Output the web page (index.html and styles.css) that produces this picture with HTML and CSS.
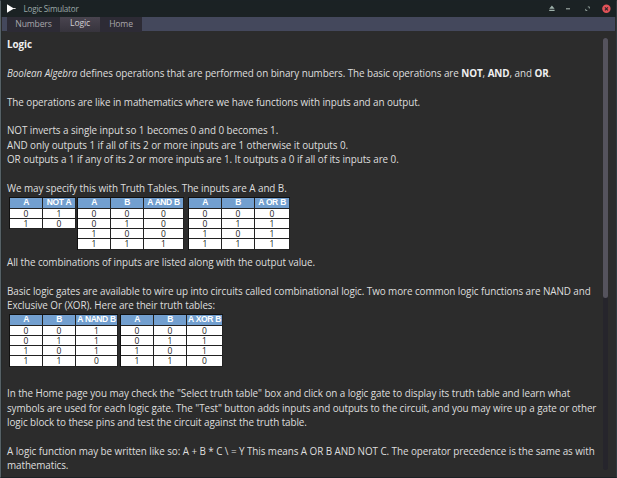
FILE: index.html
```
<!DOCTYPE html>
<html lang="en">
<head>
<meta charset="utf-8">
<title>Logic Simulator</title>
<link rel="stylesheet" href="styles.css">
</head>
<body>
<div class="window">
  <header class="titlebar">
    <svg class="app-icon" width="12" height="12" viewBox="0 0 12 12"><path d="M1 1.2 8 5.4 1 9.8Z" fill="#fff"/><path d="M7 5.5h2.6" stroke="#ddd"/></svg>
    <span class="title">Logic Simulator</span>
    <svg class="controls" width="68" height="12" viewBox="0 0 68 12">
      <path d="M2.2 5.8 4.9 2.4 7.6 5.8ZM2.2 6.8h5.4v1.3H2.2Z" fill="#9eb1aa"/>
      <path d="M19 5.8h4" stroke="#a4b0ab" stroke-width="1.1"/>
      <path d="M40.8 3.9h1.6v1.6M38.7 5.9v1.6h1.6" fill="none" stroke="#899793"/>
      <circle cx="59.4" cy="5.8" r="4.2" fill="#e25258"/>
      <path d="m57.9 4.3 3 3m0-3-3 3" stroke="#30252a" stroke-width="1.2"/>
    </svg>
  </header>
  <nav class="tabs">
    <span class="tab numbers">Numbers</span><span class="tab logic active">Logic</span><span class="tab home">Home</span>
  </nav>
  <main class="content">
    <article class="text">
      <p><b>Logic</b></p>
      <p><i>Boolean Algebra</i> defines operations that are performed on binary numbers. The basic operations are <b>NOT</b>, <b>AND</b>, and <b>OR</b>.</p>
      <p>The operations are like in mathematics where we have functions with inputs and an output.</p>
      <p>NOT inverts a single input so 1 becomes 0 and 0 becomes 1.<br>AND only outputs 1 if all of its 2 or more inputs are 1 otherwise it outputs 0.<br>OR outputs a 1 if any of its 2 or more inputs are 1. It outputs a 0 if all of its inputs are 0.</p>
      <p class="intro">We may specify this with Truth Tables. The inputs are A and B.</p>
      <div class="tables first">
        <table class="not"><tr><th>A</th><th>NOT A</th></tr><tr><td>0</td><td>1</td></tr><tr><td>1</td><td>0</td></tr></table>
        <table class="and"><tr><th>A</th><th>B</th><th>A AND B</th></tr><tr><td>0</td><td>0</td><td>0</td></tr><tr><td>0</td><td>1</td><td>0</td></tr><tr><td>1</td><td>0</td><td>0</td></tr><tr><td>1</td><td>1</td><td>1</td></tr></table>
        <table class="or"><tr><th>A</th><th>B</th><th>A OR B</th></tr><tr><td>0</td><td>0</td><td>0</td></tr><tr><td>0</td><td>1</td><td>1</td></tr><tr><td>1</td><td>0</td><td>1</td></tr><tr><td>1</td><td>1</td><td>1</td></tr></table>
      </div>
      <p>All the combinations of inputs are listed along with the output value.</p>
      <p class="intro">Basic logic gates are available to wire up into circuits called combinational logic. Two more common logic functions are NAND and<br>Exclusive Or (XOR). Here are their truth tables:</p>
      <div class="tables second">
        <table class="nand"><tr><th>A</th><th>B</th><th>A NAND B</th></tr><tr><td>0</td><td>0</td><td>1</td></tr><tr><td>0</td><td>1</td><td>1</td></tr><tr><td>1</td><td>0</td><td>1</td></tr><tr><td>1</td><td>1</td><td>0</td></tr></table>
        <table class="xor"><tr><th>A</th><th>B</th><th>A XOR B</th></tr><tr><td>0</td><td>0</td><td>0</td></tr><tr><td>0</td><td>1</td><td>1</td></tr><tr><td>1</td><td>0</td><td>1</td></tr><tr><td>1</td><td>1</td><td>0</td></tr></table>
      </div>
      <p>In the Home page you may check the "Select truth table" box and click on a logic gate to display its truth table and learn what<br>symbols are used for each logic gate. The "Test" button adds inputs and outputs to the circuit, and you may wire up a gate or other<br>logic block to these pins and test the circuit against the truth table.</p>
      <p>A logic function may be written like so: A + B * C \ = Y This means A OR B AND NOT C. The operator precedence is the same as with<br>mathematics.</p>
    </article>
    <div class="scrollbar"><div class="thumb"></div></div>
  </main>
</div>
</body>
</html>
```
FILE: styles.css
```
* { box-sizing: border-box; }
body { margin: 0; background: #2c2c2c; font-family: "Open Sans", "Noto Sans", sans-serif; overflow: hidden; }
.window {
  width: 617px;
  height: 478px;
  display: flex;
  flex-direction: column;
  border: 1px solid #1b2225;
  border-left-color: #566166;
  border-right-color: #303a40;
  background: #2c2c2c;
}
.titlebar { height: 16px; flex: none; display: flex; align-items: center; background: #1b2224; padding: 0 1px 0 5px; }
.title { margin-left: 5.5px; font-size: 8.1px; letter-spacing: -0.2px; line-height: 14px; color: #9ca9a9; }
.controls { margin-left: auto; }
.tabs { height: 14px; flex: none; display: flex; align-items: flex-start; padding-left: 5px; margin: 0 1px; background: #44485c; }
.tab { height: 15px; background: #2d2b35; color: #a9a7ab; font-size: 8.6px; letter-spacing: -0.15px; line-height: 14px; text-align: center; white-space: nowrap; }
.numbers { width: 53px; }
.logic { width: 40px; }
.home { width: 42px; }
.tab.active { height: 15px; background: linear-gradient(#49444f, #37343d); color: #d0ced2; line-height: 13px; }
.content { flex: 1; min-height: 0; display: flex; justify-content: space-between; padding: 6px 8px 7px 5px; border-left: 1px solid #252a2b; }
.text { width: 596px; color: #dedede; font-size: 9.9px; letter-spacing: -0.09px; word-spacing: 0.06px; line-height: 14.4px; white-space: nowrap; }
.text p { margin: 0 0 14.4px; }
.text p.intro { margin-bottom: 2px; }
.text b { color: #f0f0f0; }
.tables { display: flex; align-items: flex-start; height: 52px; margin-left: 2px; }
.first { margin-bottom: 5.4px; }
.second { margin-bottom: 20px; }
table { flex: none; table-layout: fixed; border-collapse: separate; border-spacing: 0; border: solid #111; border-width: 1px 0 0 1px; margin-right: 2px; }
th, td { padding: 0; height: 10.25px; text-align: center; vertical-align: top; border: solid #222; border-width: 0 1px 1px 0; }
th { font: bold 8.5px/9.25px "Liberation Sans", sans-serif; letter-spacing: -0.45px; word-spacing: 0.5px; color: #fff; background: #729fcf; }
td { font: 8.5px/9.25px "Open Sans", sans-serif; letter-spacing: 0; background: #fff; color: #222; }
.not { width: 67px; margin-right: 1px; }
.and { width: 107px; margin-right: 4px; }
.or { width: 102px; }
.nand { width: 109px; }
.xor { width: 103px; }
th:first-child, th:nth-child(2) { width: 33px; }
.scrollbar { width: 5px; margin-top: 1px; border-radius: 3px; background: #26252c; }
.thumb { height: 260px; border-radius: 3px; background: #55535d; }
```
